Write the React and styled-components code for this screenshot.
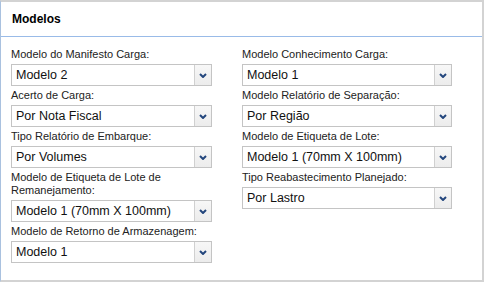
import React from 'react';
import styled, { createGlobalStyle } from 'styled-components';

const GlobalStyle = createGlobalStyle`
  body {
    margin: 0;
    background: #fff;
    font-family: "Liberation Sans", Arial, sans-serif;
  }
`;

const Panel = styled.div`
  width: 484px;
  height: 282px;
  box-sizing: border-box;
  background: #fff;
  border-top: 2px solid #d3d3d3;
  border-left: 1px solid #a9c1df;
  border-right: 2px solid #d3d3d3;
  border-bottom: 2px solid #d3d3d3;
`;

const Header = styled.div`
  height: 34px;
  display: flex;
  align-items: center;
  padding-left: 11px;
  border-bottom: 1px solid #99bbe8;
  font-size: 12px;
  font-weight: bold;
  color: #000;
`;

const Body = styled.div`
  display: grid;
  grid-template-columns: 201px 210px;
  column-gap: 30px;
  align-items: start;
  padding: 11px 0 0 10px;
`;

const Column = styled.div`
  display: flex;
  flex-direction: column;
`;

const Field = styled.div`
  display: flex;
  flex-direction: column;
  padding-bottom: 3px;
`;

const Label = styled.label`
  font-size: 11px;
  line-height: 13px;
  color: #222;
`;

const SelectBox = styled.div`
  margin-top: 3px;
  height: 22px;
  box-sizing: border-box;
  display: flex;
  border: 1px solid #c4c4c4;
  background: #fff;
`;

const Value = styled.div`
  flex: 1;
  display: flex;
  align-items: center;
  padding-left: 4px;
  font-size: 12.5px;
  color: #111;
  white-space: nowrap;
  overflow: hidden;
`;

const Trigger = styled.div`
  width: 16px;
  display: flex;
  align-items: center;
  justify-content: center;
  border-left: 1px solid #d0d0d0;
  background: linear-gradient(#f7f7f7, #ececec);
`;

const Chevron = () => (
  <svg width="8" height="5" viewBox="0 0 8 5">
    <path d="M1 1 L4 4 L7 1" fill="none" stroke="#23467d" strokeWidth="2" />
  </svg>
);

const Combo = ({ label, value }) => (
  <Field>
    <Label>{label}</Label>
    <SelectBox>
      <Value>{value}</Value>
      <Trigger>
        <Chevron />
      </Trigger>
    </SelectBox>
  </Field>
);

const left = [
  ['Modelo do Manifesto Carga:', 'Modelo 2'],
  ['Acerto de Carga:', 'Por Nota Fiscal'],
  ['Tipo Relatório de Embarque:', 'Por Volumes'],
  ['Modelo de Etiqueta de Lote de Remanejamento:', 'Modelo 1 (70mm X 100mm)'],
  ['Modelo de Retorno de Armazenagem:', 'Modelo 1'],
];

const right = [
  ['Modelo Conhecimento Carga:', 'Modelo 1'],
  ['Modelo Relatório de Separação:', 'Por Região'],
  ['Modelo de Etiqueta de Lote:', 'Modelo 1 (70mm X 100mm)'],
  ['Tipo Reabastecimento Planejado:', 'Por Lastro'],
];

export default function App() {
  return (
    <>
      <GlobalStyle />
      <Panel>
        <Header>Modelos</Header>
        <Body>
          <Column>
            {left.map(([l, v]) => (
              <Combo key={l} label={l} value={v} />
            ))}
          </Column>
          <Column>
            {right.map(([l, v]) => (
              <Combo key={l} label={l} value={v} />
            ))}
          </Column>
        </Body>
      </Panel>
    </>
  );
}
